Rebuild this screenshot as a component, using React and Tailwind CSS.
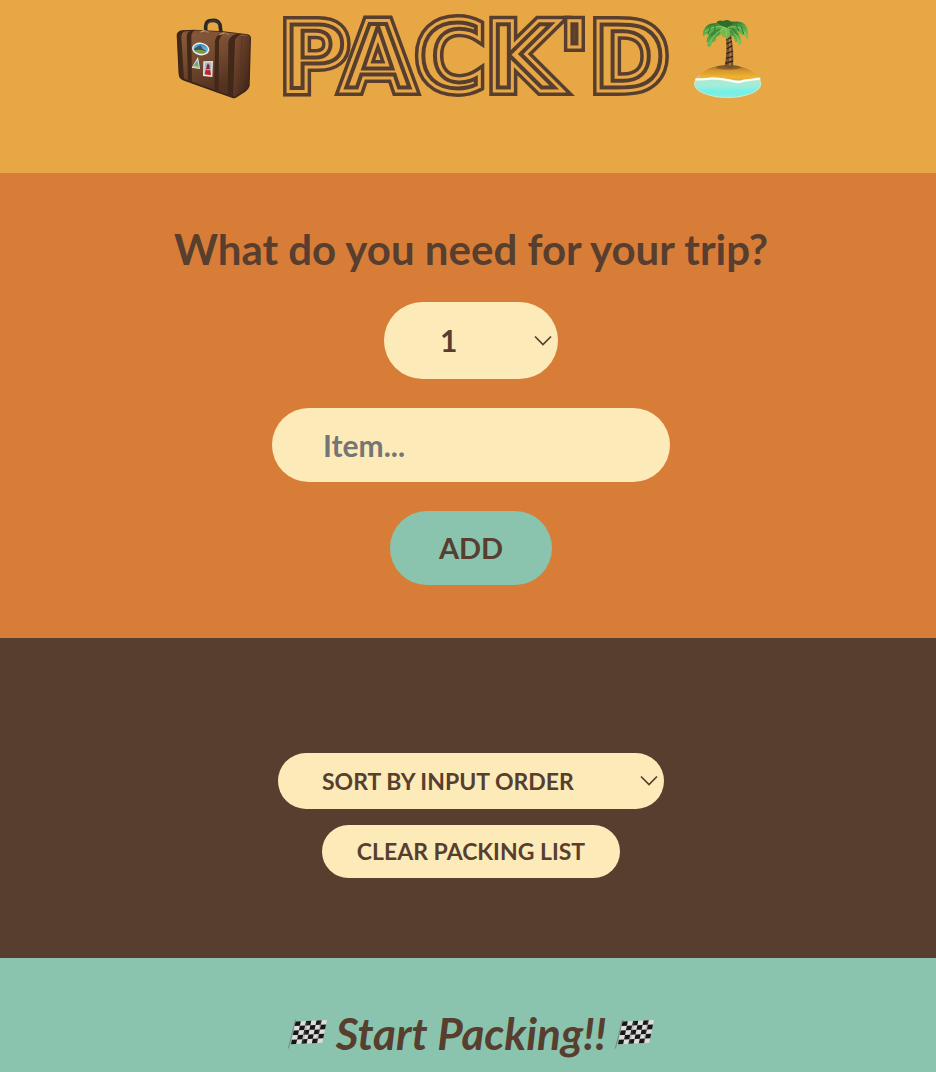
import React from "react";

function Suitcase() {
  return (
    <svg aria-hidden="true" viewBox="48 54 228 246" className="h-[82px] w-[76px] shrink-0">
      <defs>
        <linearGradient id="leather" x1="0" y1="0" x2="0.3" y2="1">
          <stop offset="0" stopColor="#8c5b3c" />
          <stop offset="0.5" stopColor="#754a30" />
          <stop offset="1" stopColor="#54321f" />
        </linearGradient>
        <linearGradient id="leatherSide" x1="0" y1="0" x2="1" y2="1">
          <stop offset="0" stopColor="#7d4d32" />
          <stop offset="1" stopColor="#3a2115" />
        </linearGradient>
        <linearGradient id="lagoon" x1="0" y1="0" x2="0" y2="1">
          <stop offset="0" stopColor="#2f8fd0" />
          <stop offset="1" stopColor="#9fd4ec" />
        </linearGradient>
      </defs>
      <path d="M137 94 V80 Q138 64 151 62 Q172 57 180 74 L183 98" fill="none" stroke="#2b2725" strokeWidth="11" strokeLinecap="round" />
      <path d="M139 76 Q144 64 158 62 Q172 61 177 73" fill="none" stroke="#57504a" strokeWidth="2" />
      <path d="M50 106 Q50 95 65 91 L104 89 L190 94 L258 102 Q273 104 273 114 L269 258 Q266 268 256 275 L230 292 Q224 297 215 293 L72 242 Q58 237 56 224 Z" fill="#3a2318" />
      <path d="M55 105 Q56 97 70 95 L190 99 L225 108 Q211 112 210 124 L208 286 L74 237 Q61 231 60 220 Z" fill="url(#leather)" />
      <path d="M62 96 L104 91 L190 96 L258 104 Q266 106 262 108 L226 115 L62 98 Z" fill="#81543a" />
      <path d="M225 114 Q229 108 240 108 L270 108 L266 254 Q263 264 255 270 L224 290 Q219 292 219 282 Z" fill="url(#leatherSide)" />
      <path d="M245 110 L242 274" stroke="#56331f" strokeWidth="2" />
      <path d="M52 108 Q53 96 68 92 L74 92 Q64 99 64 112 L72 238 Q58 234 57 222 Z M80 107 Q82 94 96 90 L106 90 Q94 97 94 110 L96 248 L84 243 Z M165 124 Q167 108 182 98 L196 98 Q180 106 177 124 L176 279 L163 274 Z M205 128 Q207 109 228 102 L246 103 Q224 110 222 130 L218 292 L203 287 Z" fill="#422819" />
      <path d="M121 97 L132 91 L146 97 M176 105 L190 98 L207 103" fill="none" stroke="#a77d3c" strokeWidth="4" />
      <path d="M124 95 L134 93 M181 103 L192 100" stroke="#e0bd72" strokeWidth="2" />
      <ellipse cx="122" cy="147" rx="26" ry="19" transform="rotate(8 122 147)" fill="#f1f1e9" />
      <ellipse cx="122" cy="147" rx="22" ry="15" transform="rotate(8 122 147)" fill="url(#lagoon)" />
      <path d="M101 147 L112 140 L121 136 L128 146 L139 153 Q130 161 116 158 Q104 154 101 147Z" fill="#3c5260" />
      <path d="M103 153 Q117 145 140 155 Q130 164 117 160Z" fill="#7d9d3b" />
      <path d="M114 171 L120 207 L95 203Z" fill="#e7eee8" />
      <path d="M112 179 L117 203 L99 201Z" fill="#51aeb1" />
      <path d="M106 190 L115 190 L112 200 L103 198Z" fill="#70a65a" />
      <path d="M98 201 L109 197 L116 203Z" fill="#e3c863" />
      <path d="M130 184 L159 183 L157 231 L129 228Z" fill="#e9e6df" />
      <path d="M134 188 L155 187 L153 226 L133 223Z" fill="#a8b9c5" />
      <path d="M139 203 L149 203 L153 226 L134 223Z" fill="#c71f24" />
      <path d="M140 197 L144 190 L149 197 L148 208 L140 208Z" fill="#782c34" />
      <path d="M139 209 L150 209" stroke="#eeeeee" strokeWidth="2" />
    </svg>
  );
}

function Island() {
  return (
    <svg aria-hidden="true" viewBox="36 54 216 246" className="h-[82px] w-[72px] shrink-0">
      <defs>
        <linearGradient id="sea" x1="0" y1="0" x2="0" y2="1">
          <stop offset="0" stopColor="#b9e6cc" />
          <stop offset="0.55" stopColor="#a4ecd8" />
          <stop offset="0.8" stopColor="#70f1e9" />
          <stop offset="1" stopColor="#8de9e4" />
        </linearGradient>
        <linearGradient id="sand" x1="0" y1="0" x2="0" y2="1">
          <stop offset="0" stopColor="#8d692b" />
          <stop offset="0.35" stopColor="#d89630" />
          <stop offset="0.75" stopColor="#efb52f" />
          <stop offset="1" stopColor="#e29c50" />
        </linearGradient>
        <linearGradient id="palm" x1="0" y1="0" x2="0.4" y2="1">
          <stop offset="0" stopColor="#245b26" />
          <stop offset="0.45" stopColor="#4ca344" />
          <stop offset="1" stopColor="#80bd55" />
        </linearGradient>
      </defs>
      <ellipse cx="143" cy="251" rx="101" ry="43" fill="#c8eacb" />
      <ellipse cx="143" cy="252" rx="98" ry="39" fill="url(#sea)" />
      <path d="M53 235 Q74 198 142 195 Q211 197 238 235 Q211 247 169 241 Q104 229 53 240Z" fill="url(#sand)" />
      <path d="M49 238 Q73 239 99 235 Q126 236 151 242 Q174 250 193 242 Q211 240 238 236" fill="none" stroke="#f8fff1" strokeWidth="7" strokeLinecap="round" />
      <ellipse cx="145" cy="202" rx="37" ry="7" fill="#63451f" opacity="0.55" />
      <path d="M137 106 L152 102 Q163 155 159 200 Q146 207 134 198 Q143 154 137 106Z" fill="#76502d" />
      <path d="M147 109 Q154 158 149 197" stroke="#ad8152" strokeWidth="5" fill="none" />
      <path d="M139 119 L154 112 M139 132 L156 124 M140 147 L157 137 M139 161 L159 153 M138 175 L159 169 M136 190 L159 183" stroke="#352315" strokeWidth="4" />
      <path d="M137 83 Q121 66 102 70 Q79 71 70 92 L68 111 L78 103 L90 106 L97 96 Q109 98 118 91 Z" fill="url(#palm)" />
      <path d="M134 85 Q96 86 82 113 L79 125 L85 129 L80 136 L90 143 L96 128 L106 124 L109 111 Q123 106 137 91Z" fill="url(#palm)" />
      <path d="M137 84 Q141 62 163 65 Q190 63 199 80 Q207 94 204 120 L195 108 L184 105 L174 92 L162 94Z" fill="url(#palm)" />
      <path d="M141 86 Q173 82 181 111 L185 130 L177 136 L172 125 L165 126 L162 110 L151 107Z" fill="url(#palm)" />
      <path d="M137 80 Q120 78 119 103 L126 101 L128 112 L135 109 L141 119 L151 105 Q155 88 137 80Z" fill="#72b94c" />
      <path d="M109 67 Q116 59 129 63 L138 60 Q152 59 157 72 L142 84 L125 77Z" fill="#2d6c2b" />
      <path d="M137 83 Q101 73 75 95 M134 86 Q103 94 89 131 M143 82 Q185 72 199 107 M145 86 Q168 93 178 127 M138 84 L139 109" fill="none" stroke="#9bce65" strokeWidth="2.5" />
      <path d="M91 82 L84 101 M105 77 L104 93 M169 76 L176 94 M184 79 L191 102 M107 99 L92 107 M160 93 L173 105" stroke="#2f7530" strokeWidth="3" />
    </svg>
  );
}

function Wordmark() {
  return (
    <svg
      role="img"
      aria-label="PACK'D"
      viewBox="0 0 394 94"
      className="h-[94px] w-[394px] shrink-0 font-['DejaVu_Sans',sans-serif] text-[96px] font-bold"
    >
      <defs>
        <text id="wordmark" x="194" y="79" textAnchor="middle">PACK'D</text>
        <mask id="wordmarkEdge" maskUnits="userSpaceOnUse" x="0" y="0" width="394" height="94">
          <use href="#wordmark" fill="white" stroke="white" strokeWidth="10" />
        </mask>
      </defs>
      <g mask="url(#wordmarkEdge)" fill="none">
        <use href="#wordmark" fill="#e8a745" stroke="#573e2f" strokeWidth="11" />
        <use href="#wordmark" stroke="#e8a745" strokeWidth="3" />
      </g>
    </svg>
  );
}

function Flag() {
  const squares = [];
  for (let row = 0; row < 5; row++) {
    for (let col = 0; col < 6; col++) {
      if ((row + col) % 2 === 0) squares.push([col, row]);
    }
  }
  return (
    <svg aria-hidden="true" viewBox="50 52 124 100" className="h-[34px] w-[41px] shrink-0">
      <path d="M76 62 L54 149" stroke="#7b8582" strokeWidth="3" />
      <g transform="matrix(15.8 -0.7 -2.8 13.8 76 67)">
        <rect width="6" height="5" fill="#dedddd" />
        {squares.map(([x, y]) => (
          <rect key={`${x}-${y}`} x={x} y={y} width="1" height="1" fill="#171717" />
        ))}
      </g>
      <path d="M111 68 L97 132 M152 66 L141 130" stroke="#777777" strokeWidth="5" opacity="0.3" />
    </svg>
  );
}

function Dropdown({ label, className, children }) {
  return (
    <div className="relative">
      <select
        aria-label={label}
        className={`block appearance-none rounded-full bg-[#fcebb9] font-bold text-[#573e2f] ${className}`}
      >
        {children}
      </select>
      <svg
        aria-hidden="true"
        viewBox="0 0 18 12"
        className="pointer-events-none absolute top-1/2 right-1.5 h-3 w-[18px] -translate-y-1/2"
      >
        <path d="M1 1.5 L9 9.5 L17 1.5" fill="none" stroke="#573e2f" strokeWidth="1.7" />
      </svg>
    </div>
  );
}

export default function App() {
  const quantities = Array.from({ length: 20 }, (_, i) => i + 1);
  return (
    <div className="flex min-h-screen flex-col bg-[#8ac4ae] font-['Lato',sans-serif] text-[#573e2f]">
      <header className="bg-[#e8a745] pt-3 pb-[67px] pl-1">
        <h1 className="flex items-center justify-center">
          <Suitcase />
          <span className="mr-[18px] ml-7"><Wordmark /></span>
          <Island />
        </h1>
      </header>

      <form
        onSubmit={(e) => e.preventDefault()}
        className="flex flex-col items-center bg-[#d77d37] pt-[51px] pb-[53px] pl-1.5"
      >
        <h2 className="mb-7 text-[42px] leading-[50px] font-bold">What do you need for your trip?</h2>
        <div className="flex flex-col items-center gap-[29px]">
          <Dropdown label="Quantity" className="h-[77px] w-[174px] pl-14 text-[30px]">
            {quantities.map((n) => (
              <option key={n} value={n}>{n}</option>
            ))}
          </Dropdown>
          <input
            type="text"
            aria-label="Item"
            placeholder="Item..."
            className="h-[74px] w-[398px] rounded-full bg-[#fcebb9] px-[51px] text-[30px] font-bold placeholder:text-[#757575]"
          />
          <button type="submit" className="h-[74px] w-[162px] rounded-full bg-[#8ac4ae] text-[29px] font-bold">
            ADD
          </button>
        </div>
      </form>

      <section className="flex flex-col items-center gap-4 bg-[#573e2f] pt-[115px] pb-20 pl-1.5">
        <Dropdown label="Sort items" className="h-14 w-[386px] pl-11 text-[23px]">
          <option>SORT BY INPUT ORDER</option>
          <option>SORT BY DESCRIPTION</option>
          <option>SORT BY PACKED STATUS</option>
        </Dropdown>
        <button type="button" className="h-[53px] w-[298px] rounded-full bg-[#fcebb9] text-[23px] font-bold">
          CLEAR PACKING LIST
        </button>
      </section>

      <footer className="pt-[50px] pl-1.5">
        <p className="flex items-center justify-center gap-2 text-[44px] leading-[50px] font-bold italic">
          <Flag />
          Start Packing!!
          <Flag />
        </p>
      </footer>
    </div>
  );
}
